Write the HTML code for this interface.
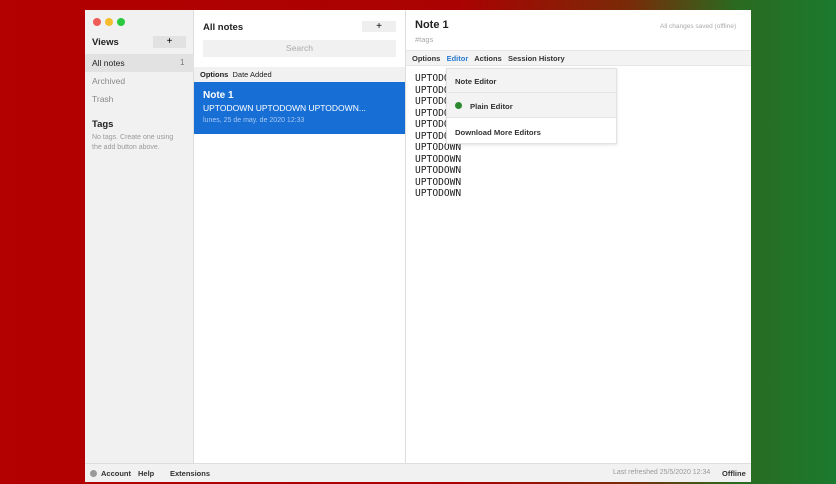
<!DOCTYPE html>
<html><head><meta charset="utf-8"><style>
*{margin:0;padding:0;box-sizing:border-box}
body{width:836px;height:484px;overflow:hidden;font-family:"Liberation Sans",sans-serif;
background:linear-gradient(to right,#b30000 0%,#aa0202 55%,#7a2a08 75%,#2a6a20 88%,#1b7a2e 100%);position:relative}
.win{position:absolute;left:85px;top:10px;width:666px;height:472px;background:#fff;overflow:hidden}
.side{position:absolute;left:0;top:0;width:109px;height:453px;background:#f1f1f1;border-right:1px solid #ddd}
.dot{position:absolute;top:8px;width:8px;height:8px;border-radius:50%}
.t{position:absolute;white-space:nowrap}
.notes{position:absolute;left:109px;top:0;width:212px;height:453px;border-right:1px solid #ddd}
.ed{position:absolute;left:321px;top:0;width:345px;height:453px}
.foot{position:absolute;left:0;top:453px;width:666px;height:19px;background:#f1f1f1;border-top:1px solid #ddd;font-size:7.5px;color:#333}
.mono{font-family:"DejaVu Sans Mono","Liberation Mono",monospace;font-size:9.6px;color:#222;line-height:11.5px}
</style></head><body>
<div class="win">
 <div class="side">
  <div class="dot" style="left:8px;background:#ee5c55"></div>
  <div class="dot" style="left:20px;background:#f5bd2e"></div>
  <div class="dot" style="left:32px;background:#2bc840"></div>
  <div class="t" style="left:7px;top:27px;font-size:9.5px;font-weight:bold;color:#222">Views</div>
  <div class="t" style="left:68px;top:26px;width:33px;height:12px;background:#e2e2e2;font-size:10px;text-align:center;line-height:12px">+</div>
  <div style="position:absolute;left:0;top:44px;width:109px;height:18px;background:#e2e2e2"></div>
  <div class="t" style="left:7px;top:48px;font-size:8.5px;color:#222">All notes</div>
  <div class="t" style="left:95px;top:48px;font-size:8px;color:#777">1</div>
  <div class="t" style="left:7px;top:66px;font-size:8.5px;color:#888">Archived</div>
  <div class="t" style="left:7px;top:84px;font-size:8.5px;color:#888">Trash</div>
  <div class="t" style="left:7px;top:109px;font-size:9.5px;font-weight:bold;color:#222">Tags</div>
  <div class="t" style="left:7px;top:123px;font-size:7px;color:#999;line-height:9.5px">No tags. Create one using<br>the add button above.</div>
 </div>
 <div class="notes">
  <div class="t" style="left:9px;top:12px;font-size:9.5px;font-weight:bold;color:#222">All notes</div>
  <div class="t" style="left:168px;top:11px;width:34px;height:11px;background:#efefef;font-size:10px;text-align:center;line-height:11px">+</div>
  <div class="t" style="left:9px;top:30px;width:193px;height:17px;background:#f1f1f1;font-size:8.5px;color:#aaa;text-align:center;line-height:17px">Search</div>
  <div style="position:absolute;left:0;top:57px;width:211px;height:15px;background:#f1f1f1"></div>
  <div class="t" style="left:6px;top:60px;font-size:7.5px;color:#222"><b>Options</b>&nbsp; Date Added</div>
  <div style="position:absolute;left:0;top:72px;width:211px;height:52px;background:#176fd6"></div>
  <div class="t" style="left:9px;top:80px;font-size:10px;font-weight:bold;color:#fff">Note 1</div>
  <div class="t" style="left:9px;top:93px;font-size:8.5px;color:#fff">UPTODOWN UPTODOWN UPTODOWN...</div>
  <div class="t" style="left:9px;top:107px;font-size:7px;color:#a8c8f0">lunes, 25 de may. de 2020 12:33</div>
 </div>
 <div class="ed">
  <div class="t" style="left:9px;top:9px;font-size:11px;font-weight:bold;color:#222">Note 1</div>
  <div class="t" style="left:9px;top:25px;font-size:7.5px;color:#aaa">#tags</div>
  <div class="t" style="left:254px;top:13px;font-size:6.5px;color:#aaa">All changes saved (offline)</div>
  <div style="position:absolute;left:0;top:40px;width:345px;height:16px;background:#f3f3f3;border-top:1px solid #e6e6e6;border-bottom:1px solid #e6e6e6"></div>
  <div class="t" style="left:6px;top:44px;font-size:7.5px;font-weight:bold;color:#333">Options&nbsp;&nbsp; <span style="color:#2a7bd0">Editor</span>&nbsp;&nbsp; Actions&nbsp;&nbsp; Session History</div>
  <div class="t mono" style="left:9px;top:63px">UPTODOWN<br>UPTODOWN<br>UPTODOWN<br>UPTODOWN<br>UPTODOWN<br>UPTODOWN<br>UPTODOWN<br>UPTODOWN<br>UPTODOWN<br>UPTODOWN<br>UPTODOWN</div>
  <div style="position:absolute;left:40px;top:58px;width:171px;height:76px;background:#fff;border:1px solid #e2e2e2;box-shadow:0 1px 3px rgba(0,0,0,.12)">
   <div style="height:24px;background:#f3f3f3;border-bottom:1px solid #e6e6e6"></div>
   <div style="height:25px;background:#f3f3f3;border-bottom:1px solid #e6e6e6"></div>
   <div class="t" style="left:8px;top:8px;font-size:7.7px;font-weight:bold;color:#333">Note Editor</div>
   <div style="position:absolute;left:8px;top:33px;width:7px;height:7px;border-radius:50%;background:#2c8a2c"></div>
   <div class="t" style="left:23px;top:33px;font-size:7.7px;font-weight:bold;color:#333">Plain Editor</div>
   <div class="t" style="left:8px;top:59px;font-size:7.7px;font-weight:bold;color:#333">Download More Editors</div>
  </div>
 </div>
 <div class="foot">
  <div style="position:absolute;left:5px;top:6px;width:7px;height:7px;border-radius:50%;background:#999"></div>
  <div class="t" style="left:16px;top:5px;font-weight:bold">Account</div>
  <div class="t" style="left:53px;top:5px;font-weight:bold">Help</div>
  <div class="t" style="left:85px;top:5px;font-weight:bold">Extensions</div>
  <div class="t" style="left:528px;top:5px;color:#999;font-size:7px">Last refreshed 25/5/2020 12:34</div>
  <div class="t" style="left:637px;top:5px;font-weight:bold">Offline</div>
 </div>
</div>
</body></html>
